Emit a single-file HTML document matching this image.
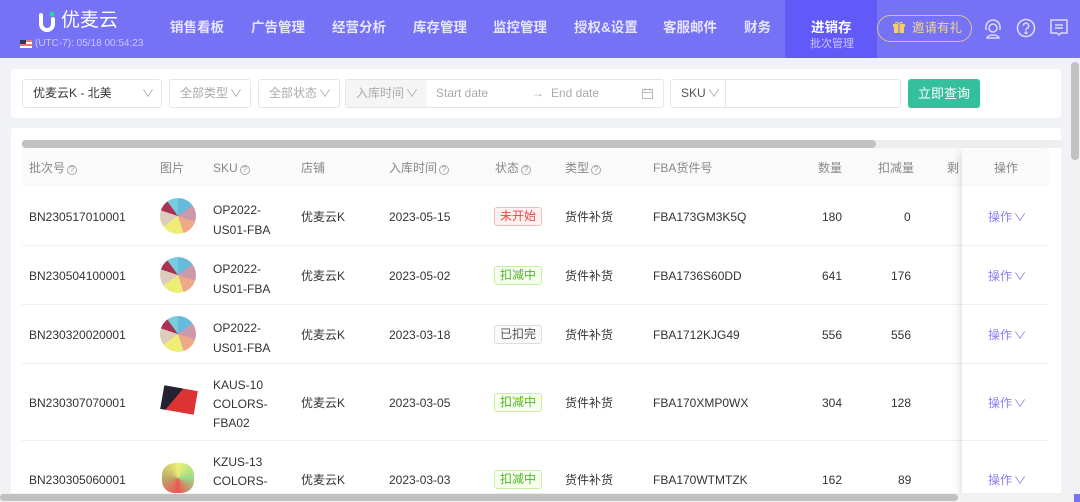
<!DOCTYPE html>
<html><head><meta charset="utf-8"><style>
*{box-sizing:border-box;margin:0;padding:0}
html,body{width:1080px;height:502px;overflow:hidden}
body{background:#f0f2f5;font-family:"Liberation Sans","Noto Sans CJK SC",sans-serif;font-size:12px;color:#333;position:relative}
.a{position:absolute;white-space:nowrap}
.nav{position:absolute;left:0;top:0;width:1080px;height:58px;background:#7672f5}
.ni{position:absolute;top:19px;color:#e6e4ff;font-size:13.5px;font-weight:bold;line-height:18px}
.sel{position:absolute;top:79px;height:29px;border:1px solid #e4e6eb;border-radius:3px;background:#fff;color:#aaa;font-size:12px;line-height:27px;padding-left:10px}
.th{position:absolute;top:160px;color:#888;font-size:12px;line-height:16px}
.td{position:absolute;font-size:12px;color:#333;line-height:14px}
.q{display:inline-block;width:10px;height:10px;border:1px solid #aaa;border-radius:50%;font-size:8px;line-height:8px;text-align:center;color:#999;vertical-align:0px;margin-left:2px}
.tag{position:absolute;height:19px;line-height:17px;padding:0 5px;border-radius:3px;font-size:12px}
.red{color:#e44;background:#fff1f0;border:1px solid #ffb8b8}
.grn{color:#52b52a;background:#f6ffed;border:1px solid #c8ef9e}
.gry{color:#555;background:#fafafa;border:1px solid #ddd}
.line{position:absolute;left:22px;width:1027px;height:1px;background:#eeeff2}
.op{position:absolute;left:988px;color:#8a7ff5;font-size:12px;line-height:14px}
.img{position:absolute;left:160px;width:36px;height:36px;border-radius:50%}
.ch{font-size:10px;transform:scaleX(1.3);display:inline-block;color:#aaa}
</style></head><body>
<div class="nav"></div>
<div class="a" style="left:785px;top:0;width:92px;height:58px;background:#615af8"></div>
<svg class="a" style="left:37px;top:11px" width="20" height="22"><path d="M4 4v9a6 6 0 0 0 12 0V8" stroke="#fff" stroke-width="4" fill="none" stroke-linecap="round"/><circle cx="15" cy="3" r="2.5" fill="#2fd2a8"/></svg>
<div class="a" style="left:61px;top:9px;color:#fff;font-size:19px;line-height:24px">优麦云</div>
<div class="a" style="left:20px;top:40px;width:12px;height:8px;background:linear-gradient(#e77 0 25%,#fff 25% 50%,#e77 50% 75%,#fff 75%)"></div>
<div class="a" style="left:20px;top:40px;width:6px;height:4px;background:#335"></div>
<div class="a" style="left:35px;top:38px;color:#c9c6fa;font-size:10px;line-height:12px">(UTC-7): 05/18 00:54:23</div>
<div class="ni" style="left:170px">销售看板</div>
<div class="ni" style="left:251px">广告管理</div>
<div class="ni" style="left:332px">经营分析</div>
<div class="ni" style="left:413px">库存管理</div>
<div class="ni" style="left:493px">监控管理</div>
<div class="ni" style="left:574px">授权&amp;设置</div>
<div class="ni" style="left:663px">客服邮件</div>
<div class="ni" style="left:744px">财务</div>
<div class="ni" style="left:811px;top:19px;color:#fff">进销存</div>
<div class="a" style="left:810px;top:37px;color:#c9c6fa;font-size:11px;line-height:14px">批次管理</div>
<div class="a" style="left:877px;top:15px;width:95px;height:27px;border:1px solid #d8c38a;border-radius:14px"></div>
<svg class="a" style="left:893px;top:21px" width="12" height="13"><rect x="1" y="4" width="10" height="8" fill="#f2cf6a"/><rect x="0" y="3" width="12" height="3" fill="#f2cf6a"/><path d="M6 3v9" stroke="#7672f5" stroke-width="1"/><path d="M6 3C4 0 2 1 3 3M6 3c2-3 4-2 3 0" stroke="#f2cf6a" fill="none"/></svg>
<div class="a" style="left:912px;top:20px;color:#f2d78a;font-size:12.5px;line-height:17px">邀请有礼</div>
<svg class="a" style="left:982px;top:18px" width="22" height="22" fill="none" stroke="#ddd9ff" stroke-width="1.5"><path d="M4 12V9a7 7 0 0 1 14 0v3"/><circle cx="11" cy="10" r="4"/><path d="M5 20c1-4 11-4 12 0z"/></svg>
<svg class="a" style="left:1016px;top:18px" width="22" height="22" fill="none" stroke="#ddd9ff" stroke-width="1.6"><circle cx="10" cy="10" r="8.5"/><path d="M7.3 7.8a2.7 2.7 0 1 1 3.8 2.5c-.8.4-1.1.9-1.1 2"/><circle cx="10" cy="14.8" r=".7" fill="#ddd9ff"/></svg>
<svg class="a" style="left:1049px;top:18px" width="22" height="22" fill="none" stroke="#ddd9ff" stroke-width="1.5"><path d="M2 2h16v13h-6l-2 2-2-2H2z"/><path d="M6 7h8M6 10h8"/></svg>

<div class="a" style="left:11px;top:69px;width:1050px;height:49px;background:#fff;border-radius:3px"></div>
<div class="sel" style="left:22px;width:140px;color:#333">优麦云K - 北美<span class="a" style="left:120px"><span class="ch">∨</span></span></div>
<div class="sel" style="left:169px;width:82px">全部类型 <span class="ch">∨</span></div>
<div class="sel" style="left:258px;width:82px">全部状态 <span class="ch">∨</span></div>
<div class="sel" style="left:345px;width:319px;padding:0"><span class="a" style="left:0;top:0;width:81px;height:27px;background:#f5f5f5;padding-left:10px">入库时间 <span class="ch">∨</span></span><span class="a" style="left:90px">Start date</span><span class="a" style="left:186px">→</span><span class="a" style="left:205px">End date</span><svg class="a" style="left:296px;top:8px" width="11" height="11" fill="none" stroke="#bbb"><rect x=".5" y="1.5" width="10" height="9"/><path d="M.5 4.5h10M3 0v3M8 0v3"/></svg></div>
<div class="sel" style="left:670px;width:231px;padding:0"><span class="a" style="left:0;width:55px;height:27px;border-right:1px solid #e4e6eb;padding-left:10px;color:#555">SKU <span class="ch">∨</span></span></div>
<div class="a" style="left:908px;top:79px;width:72px;height:29px;background:#35c09d;border-radius:3px;color:#fff;font-size:13px;line-height:29px;text-align:center">立即查询</div>

<div class="a" style="left:11px;top:128px;width:1050px;height:380px;background:#fff;border-radius:3px"></div>
<div class="a" style="left:22px;top:140px;width:1040px;height:8px;background:#eee"></div>
<div class="a" style="left:22px;top:140px;width:854px;height:8px;background:#c1c1c1;border-radius:4px"></div>
<div class="a" style="left:22px;top:148px;width:1027px;height:39px;background:#fafafa"></div>
<div class="th" style="left:29px">批次号<span class="q">?</span></div>
<div class="th" style="left:160px">图片</div>
<div class="th" style="left:213px">SKU<span class="q">?</span></div>
<div class="th" style="left:301px">店铺</div>
<div class="th" style="left:389px">入库时间<span class="q">?</span></div>
<div class="th" style="left:495px">状态<span class="q">?</span></div>
<div class="th" style="left:565px">类型<span class="q">?</span></div>
<div class="th" style="left:653px">FBA货件号</div>
<div class="th" style="left:818px">数量</div>
<div class="th" style="left:878px">扣减量</div>
<div class="th" style="left:947px">剩</div>

<div class="line" style="top:245px"></div><div class="line" style="top:304px"></div><div class="line" style="top:363px"></div><div class="line" style="top:440px"></div>

<div class="td" style="left:29px;top:210px">BN230517010001</div>
<div class="img" style="top:198px;background:conic-gradient(#6bd 0 15%,#c9a 15% 30%,#ea8 30% 45%,#ee7 45% 65%,#dcb 65% 80%,#a35 80% 90%,#7cd 90%)"></div>
<div class="td" style="left:213px;top:200px;line-height:20px">OP2022-<br>US01-FBA</div>
<div class="td" style="left:301px;top:210px">优麦云K</div>
<div class="td" style="left:389px;top:210px">2023-05-15</div>
<div class="tag red" style="left:494px;top:207px">未开始</div>
<div class="td" style="left:565px;top:210px">货件补货</div>
<div class="td" style="left:653px;top:210px">FBA173GM3K5Q</div>
<div class="td" style="left:822px;top:210px">180</div>
<div class="td" style="left:904px;top:210px">0</div>

<div class="td" style="left:29px;top:269px">BN230504100001</div>
<div class="img" style="top:257px;background:conic-gradient(#6bd 0 15%,#c9a 15% 30%,#ea8 30% 45%,#ee7 45% 65%,#dcb 65% 80%,#a35 80% 90%,#7cd 90%)"></div>
<div class="td" style="left:213px;top:259px;line-height:20px">OP2022-<br>US01-FBA</div>
<div class="td" style="left:301px;top:269px">优麦云K</div>
<div class="td" style="left:389px;top:269px">2023-05-02</div>
<div class="tag grn" style="left:494px;top:266px">扣减中</div>
<div class="td" style="left:565px;top:269px">货件补货</div>
<div class="td" style="left:653px;top:269px">FBA1736S60DD</div>
<div class="td" style="left:822px;top:269px">641</div>
<div class="td" style="left:891px;top:269px">176</div>

<div class="td" style="left:29px;top:328px">BN230320020001</div>
<div class="img" style="top:316px;background:conic-gradient(#6bd 0 15%,#c9a 15% 30%,#ea8 30% 45%,#ee7 45% 65%,#dcb 65% 80%,#a35 80% 90%,#7cd 90%)"></div>
<div class="td" style="left:213px;top:318px;line-height:20px">OP2022-<br>US01-FBA</div>
<div class="td" style="left:301px;top:328px">优麦云K</div>
<div class="td" style="left:389px;top:328px">2023-03-18</div>
<div class="tag gry" style="left:494px;top:325px">已扣完</div>
<div class="td" style="left:565px;top:328px">货件补货</div>
<div class="td" style="left:653px;top:328px">FBA1712KJG49</div>
<div class="td" style="left:822px;top:328px">556</div>
<div class="td" style="left:891px;top:328px">556</div>

<div class="td" style="left:29px;top:396px">BN230307070001</div>
<div class="a" style="left:162px;top:388px;width:34px;height:24px;background:linear-gradient(120deg,#223 0 40%,#d33 40%);transform:rotate(10deg)"></div>
<div class="td" style="left:213px;top:376px;line-height:19px">KAUS-10<br>COLORS-<br>FBA02</div>
<div class="td" style="left:301px;top:396px">优麦云K</div>
<div class="td" style="left:389px;top:396px">2023-03-05</div>
<div class="tag grn" style="left:494px;top:393px">扣减中</div>
<div class="td" style="left:565px;top:396px">货件补货</div>
<div class="td" style="left:653px;top:396px">FBA170XMP0WX</div>
<div class="td" style="left:822px;top:396px">304</div>
<div class="td" style="left:891px;top:396px">128</div>

<div class="td" style="left:29px;top:473px">BN230305060001</div>
<div class="a" style="left:162px;top:463px;width:32px;height:30px;background:conic-gradient(#ee7,#9d8,#e55,#ba6,#ee7);border-radius:40%"></div>
<div class="td" style="left:213px;top:453px;line-height:19px">KZUS-13<br>COLORS-<br>FBA02</div>
<div class="td" style="left:301px;top:473px">优麦云K</div>
<div class="td" style="left:389px;top:473px">2023-03-03</div>
<div class="tag grn" style="left:494px;top:470px">扣减中</div>
<div class="td" style="left:565px;top:473px">货件补货</div>
<div class="td" style="left:653px;top:473px">FBA170WTMTZK</div>
<div class="td" style="left:822px;top:473px">162</div>
<div class="td" style="left:898px;top:473px">89</div>

<div class="a" style="left:962px;top:148px;width:87px;height:354px;background:#fff;box-shadow:-6px 0 8px -4px rgba(0,0,0,.12)"></div>
<div class="a" style="left:962px;top:148px;width:87px;height:39px;background:#fafafa"></div>
<div class="th" style="left:994px">操作</div>
<div class="a" style="left:962px;top:245px;width:87px;height:1px;background:#eeeff2"></div>
<div class="a" style="left:962px;top:304px;width:87px;height:1px;background:#eeeff2"></div>
<div class="a" style="left:962px;top:363px;width:87px;height:1px;background:#eeeff2"></div>
<div class="a" style="left:962px;top:440px;width:87px;height:1px;background:#eeeff2"></div>
<div class="op" style="top:210px">操作 <span class="ch" style="color:#8a7ff5">∨</span></div>
<div class="op" style="top:269px">操作 <span class="ch" style="color:#8a7ff5">∨</span></div>
<div class="op" style="top:328px">操作 <span class="ch" style="color:#8a7ff5">∨</span></div>
<div class="op" style="top:396px">操作 <span class="ch" style="color:#8a7ff5">∨</span></div>
<div class="op" style="top:473px">操作 <span class="ch" style="color:#8a7ff5">∨</span></div>

<div class="a" style="left:0;top:493px;width:1070px;height:9px;background:#f1f1f1"></div>
<div class="a" style="left:0;top:494px;width:958px;height:7px;background:#c1c1c1;border-radius:4px"></div>
<div class="a" style="left:1070px;top:58px;width:10px;height:444px;background:#f1f1f1"></div>
<div class="a" style="left:1071px;top:62px;width:8px;height:98px;background:#c1c1c1;border-radius:4px"></div>
<div class="a" style="left:1074px;top:494px;width:6px;height:8px;background:#7672f5"></div>
</body></html>
